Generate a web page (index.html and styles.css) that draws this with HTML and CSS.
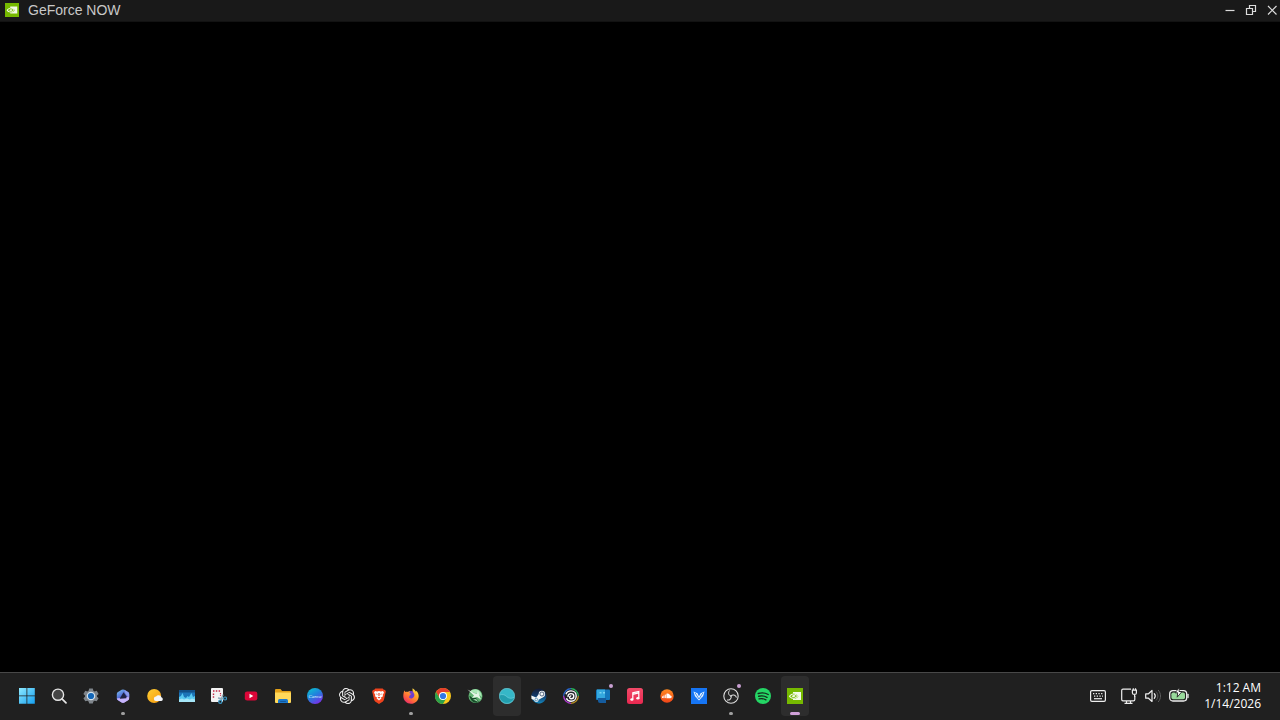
FILE: index.html
```html
<!DOCTYPE html>
<html lang="en">
<head>
    <meta charset="UTF-8">
    <meta name="viewport" content="width=device-width, initial-scale=1.0">
    <title>GeForce NOW</title>
    <link rel="stylesheet" href="styles.css">
</head>
<body>
    <header class="titlebar">
        <svg class="app-icon" viewBox="0 0 16 16">
            <rect width="16" height="16" fill="#76b900"/>
            <path d="M6 4h8v8H6v-1.200c3 .2 4.500-1.200 5.400-2.600C10 6.500 8.300 5.400 6 5.600z" fill="#f4fae8"/>
            <path d="M1.800 8.200C3 6.300 5 5.200 7 5.400c2 .2 3.300 1.400 4.300 2.600-1.500 2-3 2.900-5 2.800-2-.1-3.500-1-4.500-2.600z" fill="#f4fae8"/>
            <path d="M3.200 8.200C4.300 6.900 5.600 6.300 7 6.400c1.200.1 2.200.8 3 1.600-1 1.200-2 1.800-3.400 1.800S4.200 9.200 3.200 8.200z" fill="#76b900"/>
            <path d="M4.800 8.200c.7-.8 1.500-1.200 2.300-1.100.7.100 1.200.5 1.600.9-.5.700-1.200 1.100-2 1.100S5.300 8.800 4.800 8.200z" fill="#f4fae8"/>
        </svg>
        <h1>GeForce NOW</h1>
        <div class="window-controls">
            <button aria-label="Minimize"><svg viewBox="0 0 12 12"><path d="M1.500 6.500h9"/></svg></button>
            <button aria-label="Restore"><svg viewBox="0 0 12 12"><path d="M1.500 4.500h6v6h-6zM4.500 4.500v-3h6v6h-3"/></svg></button>
            <button aria-label="Close"><svg viewBox="0 0 12 12"><path d="M2 2l8.500 8.500M10.500 2L2 10.500"/></svg></button>
        </div>
    </header>

    <main class="stream"></main>

    <footer class="taskbar">
        <nav class="apps" aria-label="Taskbar">
            <button aria-label="Start">
                <svg viewBox="0 0 16 16">
                    <defs><linearGradient id="win" x1="0" y1="0" x2="16" y2="16" gradientUnits="userSpaceOnUse"><stop stop-color="#8ee9ff"/><stop offset="1" stop-color="#149ff0"/></linearGradient></defs>
                    <path fill="url(#win)" d="M0 0h7.500v7.500H0zM8.300 0h7.500v7.500H8.300zM0 8.300h7.500v7.500H0zM8.300 8.300h7.500v7.500H8.300z"/>
                </svg>
            </button>
            <button aria-label="Search">
                <svg viewBox="0 0 16 16">
                    <circle cx="7" cy="6.700" r="5.600" fill="#454545" stroke="#e6e6e6" stroke-width="1.400"/>
                    <path d="M11 10.800l4 4" stroke="#e6e6e6" stroke-width="1.700" stroke-linecap="round"/>
                </svg>
            </button>
            <button aria-label="Settings">
                <svg viewBox="0 0 16 16">
                    <path d="M6.200.6h3.600l.6 2.100 1.200.7 2.100-.6 1.900 3.100-1.600 1.500v1.300l1.600 1.500-1.900 3.100-2.100-.6-1.200.7-.6 2H6.200l-.6-2-1.200-.7-2.100.6-1.900-3.100L2 8.700V7.400L.4 5.900l1.900-3.100 2.100.6 1.200-.7z" fill="#7f858b"/>
                    <circle cx="8" cy="8" r="4.300" fill="#d3e2ee"/>
                    <circle cx="8" cy="8" r="3.100" fill="#1266b8"/>
                </svg>
            </button>
            <button class="running" aria-label="Microsoft 365 Copilot">
                <svg viewBox="0 0 16 16">
                    <defs><linearGradient id="m365" x1="3" y1="1" x2="13" y2="15" gradientUnits="userSpaceOnUse"><stop stop-color="#7fc8f4"/><stop offset=".5" stop-color="#4a5fd0"/><stop offset="1" stop-color="#d7a2f2"/></linearGradient></defs>
                    <path d="M6.700 1.800q1.300-.8 2.600 0l3.700 2.100q1.200.7 1.200 2v4.400q0 1.300-1.200 2l-3.700 2.100q-1.300.8-2.600 0L3 12.300q-1.200-.7-1.200-2V5.900q0-1.300 1.200-2z" fill="url(#m365)"/>
                    <path d="M9.300 1.800l3.700 2.100q1.200.7 1.200 2v3.500L10.500 6z" fill="#8c9bea"/>
                    <path d="M1.800 10.500L5 10l8.500-1 .6 1.500q-.1 1.200-1.100 1.800l-3.700 2.100q-1.300.8-2.600 0L3 12.300q-1-.6-1.200-1.800z" fill="#c6b4fb"/>
                    <path d="M8.600 4.300l2.800 3.900v2l-6.800.6z" fill="#202342"/>
                </svg>
            </button>
            <button aria-label="Weather">
                <svg viewBox="0 0 16 16">
                    <defs><linearGradient id="sun" x2="1" y2="1"><stop stop-color="#ffce32"/><stop offset="1" stop-color="#f59a10"/></linearGradient></defs>
                    <circle cx="7.200" cy="8" r="7" fill="url(#sun)"/>
                    <path d="M9 13a2.200 2.200 0 0 1 .1-4.400 3 3 0 0 1 5.300.7 1.900 1.900 0 0 1-.1 3.700z" fill="#f3f6fb"/>
                </svg>
            </button>
            <button aria-label="Photos">
                <svg viewBox="0 0 16 16">
                    <path d="M0 2h16v12H0z" fill="#1c74b8"/>
                    <path d="M0 2h16v2.500H0z" fill="#124f86"/>
                    <path d="M0 9l2-1 1.500-3L5 9l2 1 1.500-2L10 9l2.500-4L14 9l2-1v6H0z" fill="#58c8ef"/>
                    <path d="M0 14v-2.500l3-1 2 1 3-1 3 1 2-1 3 1V14z" fill="#a5e6f7"/>
                </svg>
            </button>
            <button aria-label="Snipping Tool">
                <svg viewBox="0 0 16 16">
                    <rect x="0" y="0" width="12" height="14" rx="1" fill="#f3f3f3"/>
                    <path d="M2 3h8M2.500 5.500v5" stroke="#c52846" stroke-width="1.400" stroke-dasharray="1.500 1.300"/>
                    <path d="M9.500 5v3" stroke="#c52846" stroke-width="1.200" stroke-dasharray="1.300 1"/>
                    <path d="M7 10l6 1M12 6.500l-2 6" stroke="#8ca8b8" stroke-width="1.300"/>
                    <circle cx="9.300" cy="13.700" r="1.600" fill="#202020" stroke="#3c98c6" stroke-width="1.200"/>
                    <circle cx="14" cy="10.500" r="1.500" fill="#202020" stroke="#3c98c6" stroke-width="1.200"/>
                </svg>
            </button>
            <button aria-label="YouTube">
                <svg viewBox="0 0 16 16">
                    <rect x="1.800" y="3.500" width="12.500" height="9" rx="2.300" fill="#dc0638"/>
                    <path d="M6.500 5.800v4.400L10.300 8z" fill="#fff"/>
                </svg>
            </button>
            <button aria-label="File Explorer">
                <svg viewBox="0 0 16 16">
                    <path d="M0 2q0-1 1-1h4.500l1.600 2H15q1 0 1 1v9H0z" fill="#e3a017"/>
                    <path d="M0 4.500h16V14q0 1-1 1H1q-1 0-1-1z" fill="#ffd85a"/>
                    <path d="M3 15v-2.500q0-1.500 1.500-1.500h7q1.500 0 1.500 1.500V15z" fill="#1b78cc"/>
                    <path d="M5.200 13h5.600v.8H5.200z" fill="#104f91"/>
                </svg>
            </button>
            <button aria-label="Canva">
                <svg viewBox="0 0 16 16">
                    <defs><linearGradient id="canva" x1=".1" y1="0" x2=".7" y2="1"><stop stop-color="#08c6cf"/><stop offset=".5" stop-color="#227fdd"/><stop offset="1" stop-color="#7c2ce8"/></linearGradient></defs>
                    <circle cx="8" cy="8" r="8" fill="url(#canva)"/>
                    <text class="canva-mark" x="8" y="9.500" text-anchor="middle" fill="#dff6ff">Canva</text>
                </svg>
            </button>
            <button aria-label="ChatGPT">
                <svg viewBox="0 0 24 24">
                    <path fill="#f0f0f0" d="M22.2819 9.8211a5.9847 5.9847 0 0 0-.5157-4.9108 6.0462 6.0462 0 0 0-6.5098-2.9A6.0651 6.0651 0 0 0 4.9807 4.1818a5.9847 5.9847 0 0 0-3.9977 2.9 6.0462 6.0462 0 0 0 .7427 7.0966 5.98 5.98 0 0 0 .511 4.9107 6.051 6.051 0 0 0 6.5146 2.9001A5.9847 5.9847 0 0 0 13.2599 24a6.0557 6.0557 0 0 0 5.7718-4.2058 5.9894 5.9894 0 0 0 3.9977-2.9001 6.0557 6.0557 0 0 0-.7475-7.0729zm-9.022 12.6081a4.4755 4.4755 0 0 1-2.8764-1.0408l.1419-.0804 4.7783-2.7582a.7948.7948 0 0 0 .3927-.6813v-6.7369l2.02 1.1686a.071.071 0 0 1 .038.052v5.5826a4.504 4.504 0 0 1-4.4945 4.4944zm-9.6607-4.1254a4.4708 4.4708 0 0 1-.5346-3.0137l.142.0852 4.783 2.7582a.7712.7712 0 0 0 .7806 0l5.8428-3.3685v2.3324a.0804.0804 0 0 1-.0332.0615L9.74 19.9502a4.4992 4.4992 0 0 1-6.1408-1.6464zM2.3408 7.8956a4.485 4.485 0 0 1 2.3655-1.9728V11.6a.7664.7664 0 0 0 .3879.6765l5.8144 3.3543-2.0201 1.1685a.0757.0757 0 0 1-.071 0l-4.8303-2.7865A4.504 4.504 0 0 1 2.3408 7.872zm16.5963 3.8558L13.1038 8.364 15.1192 7.2a.0757.0757 0 0 1 .071 0l4.8303 2.7913a4.4944 4.4944 0 0 1-.6765 8.1042v-5.6772a.79.79 0 0 0-.407-.667zm2.0107-3.0231l-.142-.0852-4.7735-2.7818a.7759.7759 0 0 0-.7854 0L9.409 9.2297V6.8974a.0662.0662 0 0 1 .0284-.0615l4.8303-2.7866a4.4992 4.4992 0 0 1 6.6802 4.66zM8.3065 12.863l-2.02-1.1638a.0804.0804 0 0 1-.038-.0567V6.0742a4.4992 4.4992 0 0 1 7.3757-3.4537l-.142.0805L8.704 5.459a.7948.7948 0 0 0-.3927.6813zm1.0976-2.3654l2.602-1.4998 2.6069 1.4998v2.9994l-2.5974 1.4997-2.6067-1.4997Z"/>
                </svg>
            </button>
            <button aria-label="Brave">
                <svg viewBox="0 0 16 16">
                    <path d="M4.300.5h7.400l1.300 1.400 1-.1.900 2-.5 1.500-1.500 6.800-1 1.300L8 16l-3.900-2.600-1-1.300-1.500-6.800-.5-1.500.9-2 1 .1z" fill="#ef431d"/>
                    <path d="M4 3l2 .4L8 3l2 .4 2-.4 1 1.700-1.300 2 .3 1.600-2 1.300.4 1L8 12.600 5.600 10.600l.4-1-2-1.300.3-1.600-1.300-2z" fill="#fff"/>
                    <path d="M4.500 5.500l2 .5-.2 1zM11.500 5.500l-2 .5.200 1zM7.400 5h1.200L8.500 8H7.500zM6.500 9.500L8 8.700l1.500.8L8 10.400z" fill="#ef431d"/>
                </svg>
            </button>
            <button class="running" aria-label="Firefox">
                <svg viewBox="0 0 16 16">
                    <defs><linearGradient id="fox" x1=".9" y1="0" x2=".2" y2="1"><stop stop-color="#fff15a"/><stop offset=".35" stop-color="#ffac28"/><stop offset=".7" stop-color="#ff633d"/><stop offset="1" stop-color="#e52370"/></linearGradient></defs>
                    <circle cx="8" cy="8" r="5" fill="#723fd1"/>
                    <path d="M1.600 2.200c.1 1 .5 1.400 1 1.800.8-.5 1.700-.4 2.600 0 .4-.8 1.200-1.200 2-1.300-.6.700-.8 1.400-.7 2.100.5.700 1.800.5 1.900 1.100-.1.700-1.300.9-1.800 1.500-.2.500 0 1.200-.8 1.300.6 1.600 2.100 2 3.500 1.400 1.700-.8 2.500-2.300 1.900-4C10.800 4.500 8.900 3.200 9.700.2c1 .8 2.600 2 3.300 3.600l.3-1.100c1.700 1.600 2.500 3.800 2.400 5.800-.3 4.200-3.600 7.300-7.700 7.300-4.300 0-7.600-3.300-7.700-7.500 0-2.200.4-4.400 1.300-6.100z" fill="url(#fox)"/>
                    <path d="M6.500 6.100c1-.8 2.600-.6 3.600.5.900 1.200.6 2.700-.4 3.400-1.100.7-2.700.4-3.500-.7.900 0 1-.8 1-1.300.5-.5 1.500-.7 1.600-1.300z" fill="#6c3ecb"/>
                </svg>
            </button>
            <button aria-label="Chrome">
                <svg viewBox="0 0 16 16">
                    <circle cx="8" cy="8" r="8" fill="#fbc81b"/>
                    <path d="M1.070 4A8 8 0 0 1 14.930 4H8L4.540 10z" fill="#e43e2b"/>
                    <path d="M1.070 4A8 8 0 0 0 8 16l3.460-6H4.540z" fill="#2ba24c"/>
                    <circle cx="8" cy="8" r="4" fill="#fff"/>
                    <circle cx="8" cy="8" r="3.100" fill="#3278e6"/>
                </svg>
            </button>
            <button aria-label="Game launcher">
                <svg viewBox="0 0 16 16">
                    <circle cx="8.500" cy="8" r="7" fill="#5fb070"/>
                    <path d="M3 3.500c3-3.500 9-3 11 1.500l1 4-4-3z" fill="#a9e8b6"/>
                    <path d="M3 8l2.500 2L9 10l3 4c-4 2-8.500-.5-9.500-6z" fill="#164d29"/>
                    <path d="M.5 1.500L7 5l3 1 1-4 1 4.500 2 5L10 9l-5 1 2-2.500z" fill="#e3f5e5"/>
                    <path d="M6 11.500l3-.5 2.500 3z" fill="#a6dcae"/>
                </svg>
            </button>
            <button class="open" aria-label="Teal">
                <svg viewBox="0 0 16 16">
                    <circle cx="8" cy="8" r="7.700" fill="#36b7c7" stroke="#73d4df" stroke-width=".6"/>
                    <path d="M.6 7c3-1 5-.4 7 1.500s4.500 2.500 7.500.9A7.400 7.400 0 0 1 .6 7z" fill="#239eae"/>
                    <path d="M.6 7c3-1 5-.4 7 1.500s4.500 2.500 7.500.9" fill="none" stroke="#78d4df" stroke-width=".6"/>
                </svg>
            </button>
            <button aria-label="Steam">
                <svg viewBox="0 0 16 16">
                    <defs><linearGradient id="steam" x2="0" y2="1"><stop stop-color="#141b34"/><stop offset=".5" stop-color="#103a6c"/><stop offset="1" stop-color="#1588bd"/></linearGradient></defs>
                    <path d="M.5 7A7.500 7.500 0 1 1 1 10.900z" fill="url(#steam)"/>
                    <path d="M.3 7.600l4.800 2 3.200-4 4.300 3.300-5 2.900c0 2.800-4 2.900-4.600.3L.5 10.900z" fill="#f1f5f8"/>
                    <circle cx="10.900" cy="6" r="3.200" fill="#f1f5f8"/>
                    <circle cx="10.900" cy="6" r="2" fill="none" stroke="#182e50" stroke-width=".7"/>
                    <circle cx="5.300" cy="11.500" r="1.300" fill="none" stroke="#176498" stroke-width=".6"/>
                </svg>
            </button>
            <button aria-label="Ubisoft Connect">
                <svg viewBox="0 0 16 16" fill="none">
                    <path d="M8 .8A7.200 7.200 0 0 1 15.200 8" stroke="#28b65c" stroke-width="1.500"/>
                    <path d="M15.200 8A7.200 7.200 0 0 1 8 15.200" stroke="#b68e21" stroke-width="1.500"/>
                    <path d="M8 15.200A7.200 7.200 0 0 1 .8 8" stroke="#b23bd2" stroke-width="1.500"/>
                    <path d="M.8 8A7.200 7.200 0 0 1 8 .8" stroke="#2867cf" stroke-width="1.500"/>
                    <circle cx="8" cy="8" r="6.500" fill="#202126"/>
                    <path d="M3 6.200C3.800 4 5.800 2.900 8 2.900c3 0 5.200 2.200 5.200 5.100S11 13.200 8 13.200c-2.200 0-3.900-1.200-4.600-3M5.100 9C4.600 7 6 5.600 8 5.600c1.700 0 2.800 1 2.800 2.600 0 1.500-1.100 2.500-2.600 2.500-1.300 0-1.800-1-1.500-1.900.3-.7 1-.9 1.600-.6" stroke="#fff" stroke-width="1.400"/>
                </svg>
            </button>
            <button class="notice" aria-label="Phone Link">
                <svg viewBox="0 0 16 16">
                    <rect x="1" y="1.500" width="14" height="10.500" rx="1" fill="#1478bd"/>
                    <path d="M2 1.500h8v9H2z" fill="#35a9df"/>
                    <path d="M3 10h8v5H5q-2 0-2-2z" fill="#155c9e"/>
                    <path d="M4.500 4h2v1.500h-2zM8 4h2v1.500H8z" fill="#7ed6f3"/>
                </svg>
            </button>
            <button aria-label="Apple Music">
                <svg viewBox="0 0 16 16">
                    <defs><linearGradient id="music" x2="0" y2="1"><stop stop-color="#f24a68"/><stop offset="1" stop-color="#ea2850"/></linearGradient></defs>
                    <rect width="16" height="16" rx="2.500" fill="url(#music)"/>
                    <path d="M5.800 11V4.800l6-1.400V10M5.800 6.300l6-1.400" fill="none" stroke="#fff" stroke-width="1.200"/>
                    <ellipse cx="4.900" cy="11.500" rx="1.600" ry="1.300" fill="#fff"/>
                    <ellipse cx="10.900" cy="10.300" rx="1.600" ry="1.300" fill="#fff"/>
                </svg>
            </button>
            <button aria-label="SoundCloud">
                <svg viewBox="0 0 16 16">
                    <defs><linearGradient id="cloud" x2="0" y2="1"><stop stop-color="#ff8a20"/><stop offset="1" stop-color="#f04418"/></linearGradient></defs>
                    <circle cx="8" cy="8" r="6.700" fill="url(#cloud)"/>
                    <path d="M7.400 10.200V5.700c2-.8 3.500.4 3.700 1.900 2-.1 2.200 2.600.3 2.600z" fill="#fff"/>
                    <path d="M3.600 8.300v1.700M4.900 7.500v2.600M6.300 6.600v3.500" stroke="#fff" stroke-width="1"/>
                </svg>
            </button>
            <button aria-label="Vortex">
                <svg viewBox="0 0 16 16">
                    <rect width="16" height="16" fill="#1675f4"/>
                    <path d="M2.500 3.500l4 1.700L8 8.500l1.500-3.300 4-1.700L12 8.500 8 13 4 8.500z" fill="#e8f5ff"/>
                    <path d="M4 4.800L8 11l4-6.200M4 8.500L8 13l4-4.500" fill="none" stroke="#1675f4" stroke-width=".8"/>
                </svg>
            </button>
            <button class="running notice" aria-label="OBS Studio">
                <svg viewBox="0 0 16 16" fill="none" stroke="#dedede">
                    <defs><path id="blade" d="M8 8C5.500 7.600 4.800 4.600 6.500 2.500"/></defs>
                    <circle cx="8" cy="8" r="7.200" fill="#252525" stroke-width="1.100"/>
                    <use href="#blade"/>
                    <use href="#blade" transform="rotate(120 8 8)"/>
                    <use href="#blade" transform="rotate(240 8 8)"/>
                    <circle cx="8" cy="8" r=".8" fill="#dedede" stroke="none"/>
                </svg>
            </button>
            <button aria-label="Spotify">
                <svg viewBox="0 0 16 16">
                    <circle cx="8" cy="8" r="8" fill="#24d665"/>
                    <path d="M3.200 5.500c3.600-1 7-.7 10 1M3.700 8.300c3-.8 5.800-.4 8.300 1M4.100 10.900c2.500-.6 4.700-.3 6.800.9" fill="none" stroke="#142b1b" stroke-width="1.400" stroke-linecap="round"/>
                </svg>
            </button>
            <button class="open active" aria-label="GeForce NOW">
                <svg viewBox="0 0 16 16">
                    <rect width="16" height="16" fill="#76b900"/>
                    <path d="M6 4h8v8H6v-1.200c3 .2 4.500-1.200 5.400-2.600C10 6.500 8.300 5.400 6 5.600z" fill="#f4fae8"/>
                    <path d="M1.800 8.200C3 6.300 5 5.200 7 5.400c2 .2 3.300 1.400 4.300 2.600-1.500 2-3 2.900-5 2.800-2-.1-3.500-1-4.500-2.600z" fill="#f4fae8"/>
                    <path d="M3.200 8.200C4.300 6.900 5.600 6.300 7 6.400c1.200.1 2.200.8 3 1.600-1 1.200-2 1.800-3.400 1.800S4.200 9.200 3.200 8.200z" fill="#76b900"/>
                    <path d="M4.800 8.200c.7-.8 1.500-1.200 2.300-1.100.7.100 1.200.5 1.600.9-.5.700-1.200 1.100-2 1.100S5.300 8.800 4.800 8.200z" fill="#f4fae8"/>
                </svg>
            </button>
        </nav>

        <div class="tray">
            <button aria-label="Touch keyboard">
                <svg width="16" height="16" viewBox="0 0 16 16">
                    <rect x=".6" y="2.600" width="14.800" height="10.800" rx="1.300" fill="none" stroke="#eee" stroke-width="1.200"/>
                    <path d="M3 5.700h10M4 8.100h9" stroke="#eee" stroke-width="1.300" stroke-dasharray="1.300 1.400"/>
                    <path d="M4 10.700h8" stroke="#eee" stroke-width="1.200"/>
                </svg>
            </button>
            <button class="system" aria-label="Network, volume and battery">
                <svg width="16" height="16" viewBox="0 0 16 16" fill="none" stroke="#eee" stroke-width="1.200">
                    <path d="M10 1.200H2Q.7 1.200.7 2.500v9q0 1.300 1.300 1.300h10.500q1.300 0 1.300-1.300V8M5.500 12.800v2.500M9.500 12.800v2.500M3.500 15.300h8"/>
                    <path d="M11.400 2.200h4v2.700q0 1.500-2 1.500t-2-1.500zM12.300 2.200V.3M14.500 2.200V.3M13.600 6.400V9"/>
                </svg>
                <svg width="16" height="16" viewBox="0 0 16 16" fill="none" stroke-linecap="round" stroke-linejoin="round">
                    <path d="M.7 5.800h2.800L7 2.500v11l-3.500-3.300H.7zM9.300 5.700c1.200 1.400 1.200 3.200 0 4.600" stroke="#eee" stroke-width="1.200"/>
                    <path d="M11.300 3.900c2.200 2.400 2.200 5.800 0 8.200M13.400 2.300c2.900 3.300 2.900 8.100 0 11.400" stroke="#5d5d5d"/>
                </svg>
                <svg width="20" height="16" viewBox="0 0 20 16">
                    <rect x=".7" y="2.700" width="17" height="10.300" rx="3.200" fill="#202020" stroke="#eee" stroke-width="1.300"/>
                    <rect x="2.400" y="4.400" width="13.600" height="6.900" rx="1.800" fill="#98d99b"/>
                    <path d="M19 6.500v3" stroke="#eee" stroke-width="1.300" stroke-linecap="round"/>
                    <path d="M10.500-.5L6 4.800h2.700L8.200 9.200l4.800-5.700h-3z" fill="#fff" stroke="#202020" stroke-width=".9"/>
                </svg>
            </button>
            <button class="clock"><time datetime="2026-01-14T01:12">1:12 AM<br>1/14/2026</time></button>
        </div>
    </footer>
</body>
</html>
```
FILE: styles.css
```css
* {
    box-sizing: border-box;
}
body {
    display: flex;
    flex-direction: column;
    min-height: 100vh;
    margin: 0;
    background-color: #000;
    color: #fff;
    font-family: "Liberation Sans", Arial, sans-serif;
}
button {
    padding: 0;
    border: none;
    background: none;
    color: inherit;
    font: inherit;
}
svg {
    display: block;
    flex-shrink: 0;
}

/* window title bar */
.titlebar {
    display: flex;
    align-items: center;
    height: 22px;
    padding: 0 2px 1px 5px;
    background-color: #191919;
    border-bottom: 1px solid #121212;
}
.app-icon {
    width: 14px;
    height: 14px;
}
h1 {
    margin: 0 0 0 9px;
    color: #c8c8c8;
    font-size: 14px;
    font-weight: normal;
    line-height: 20px;
}
.window-controls {
    display: flex;
    gap: 9px;
    margin-left: auto;
}
.window-controls svg {
    width: 12px;
    height: 12px;
    fill: none;
    stroke: #dcdcdc;
    stroke-width: 1.2;
}
.stream {
    flex: 1;
}

/* taskbar */
.taskbar {
    display: flex;
    align-items: center;
    justify-content: space-between;
    height: 48px;
    padding: 0 19px 1px 13px;
    background-color: #202020;
    border-top: 1px solid #484848;
}
.apps {
    display: flex;
    gap: 4px;
}
.apps button {
    position: relative;
    display: flex;
    align-items: center;
    justify-content: center;
    width: 28px;
    height: 40px;
    border-radius: 4px;
}
.apps svg {
    width: 16px;
    height: 16px;
}
.apps .open {
    background-color: #2d2d2d;
}
.apps .running::after,
.apps .active::after {
    content: "";
    position: absolute;
    bottom: 1px;
    left: 12px;
    width: 4px;
    height: 3px;
    border-radius: 2px;
    background-color: #a0a0a0;
}
.apps .active::after {
    left: 9px;
    width: 10px;
    background-color: #d0a0d8;
}
.apps .notice::before {
    content: "";
    position: absolute;
    top: 8px;
    right: 4px;
    width: 4px;
    height: 4px;
    border-radius: 50%;
    background-color: #c9a0d2;
}
.canva-mark {
    font: italic 5px "Liberation Serif", serif;
}

/* system tray */
.tray {
    display: flex;
    align-items: center;
    gap: 15px;
}
.system {
    display: flex;
    gap: 8px;
}
.clock {
    font-family: "Open Sans", "Noto Sans", sans-serif;
    font-size: 12px;
    line-height: 16px;
    text-align: right;
}
```
